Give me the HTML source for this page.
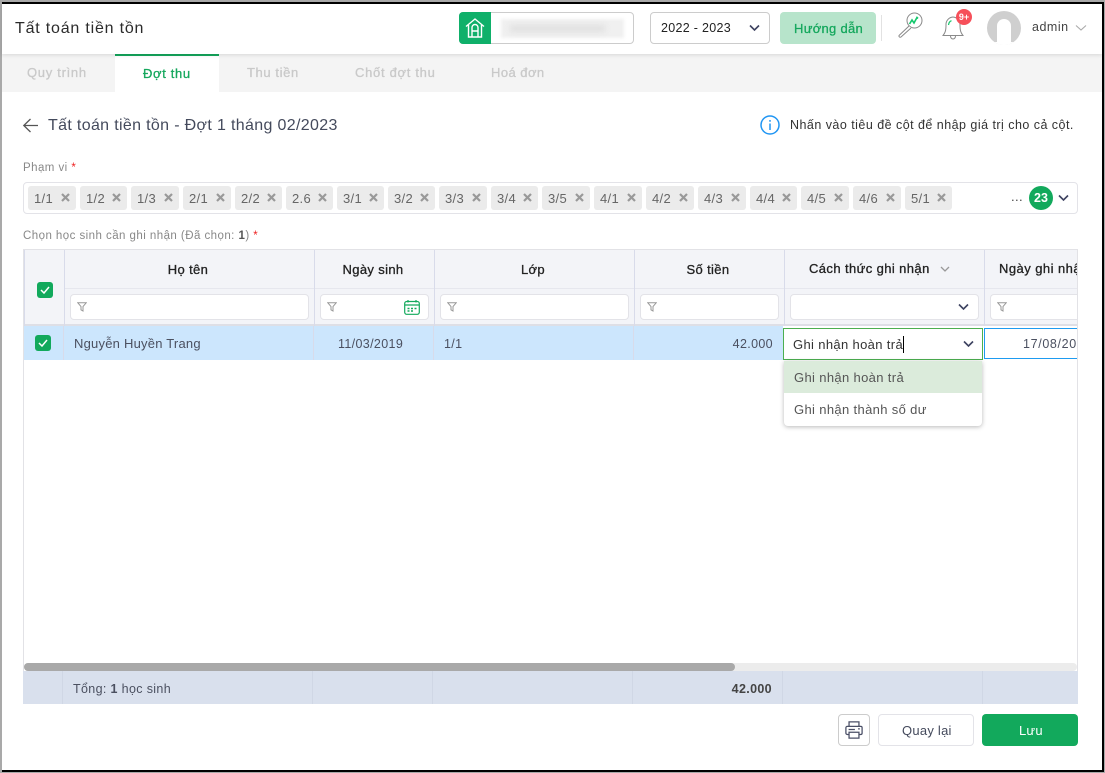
<!DOCTYPE html>
<html lang="vi"><head><meta charset="utf-8"><title>Tất toán tiền tồn</title>
<style>
*{box-sizing:border-box}
html,body{margin:0;padding:0}
body{width:1105px;height:773px;overflow:hidden;position:relative;background:#a9a9a9;font-family:"Liberation Sans",sans-serif;font-size:13px;color:#555}
.a{position:absolute}
.t{position:absolute;white-space:nowrap;line-height:18px;letter-spacing:.35px}
.sb{-webkit-text-stroke:.3px currentColor}
.box{position:absolute;background:#fff;border:1px solid #e3e3e8;border-radius:4px}
.tag{position:absolute;top:186px;height:24px;background:#ebebeb;border-radius:3px;font-size:13px;color:#666;line-height:25px;padding-left:6px;letter-spacing:.3px}
.tag svg{position:absolute;right:6px;top:7px}
.v{position:absolute;width:1px;background:#d8dbea}
.h{color:#222;font-size:13px;transform:translateX(-50%)}
svg{position:absolute;display:block}
</style></head><body>
<div class="a" style="left:2px;top:2px;width:1102px;height:770px;background:#000"></div>
<div class="a" id="page" style="left:2px;top:4px;width:1100px;height:766px;background:#fff"></div>

<!-- header -->
<div class="a" style="left:2px;top:4px;width:1100px;height:50px;background:#fff;box-shadow:0 1px 4px rgba(0,0,0,.12);z-index:1"></div>
<div style="position:absolute;inset:0;z-index:2">
<div class="t" style="left:15px;top:20px;font-size:16px;color:#2b2b2b;letter-spacing:.8px">Tất toán tiền tồn</div>

<div class="box" style="left:459px;top:12px;width:175px;height:32px;border-color:#ccc"></div>
<div class="a" style="left:459px;top:12px;width:32px;height:32px;background:#0fb06a;border-radius:4px 0 0 4px"></div>
<svg style="left:464px;top:17px" width="22" height="22" viewBox="0 0 22 22" fill="none" stroke="#fff" stroke-width="1.4"><path d="M2 9.5 11 2l9 7.5M4.5 8v12h13V8"/><path d="M8 20v-9.5a3 3 0 0 1 6 0V20M8 14h6"/></svg>
<div class="a" style="left:501px;top:19px;width:123px;height:19px;background:#f0f0f0;filter:blur(1.500px)"></div>
<div class="a" style="left:510px;top:25px;width:95px;height:7px;background:#e0e0e0;filter:blur(3px)"></div>

<div class="box" style="left:650px;top:12px;width:120px;height:32px;border-color:#ccc"></div>
<div class="t" style="left:661px;top:19px;color:#222;font-size:12.5px;letter-spacing:.3px">2022 - 2023</div>
<svg style="left:749px;top:24px" width="11" height="8" viewBox="0 0 11 8" fill="none" stroke="#3d4260" stroke-width="1.6"><path d="M1 1.5l4.5 4.500L10 1.500"/></svg>

<div class="a" style="left:780px;top:12px;width:96px;height:32px;background:#b7e4cb;border-radius:4px"></div>
<div class="t sb" style="left:794px;top:20px;color:#14a75c;font-size:13px;letter-spacing:.3px">Hướng dẫn</div>
<div class="a" style="left:881px;top:15px;width:1px;height:26px;background:#e2e2e2"></div>

<svg style="left:897px;top:12px" width="27" height="27" viewBox="0 0 27 27" fill="none"><circle cx="17.500" cy="8.500" r="7.500" stroke="#888" stroke-width="1"/><path d="M12 14 2 23.500a1.300 1.300 0 0 0 2 1.500L14 16" stroke="#888" fill="#fff"/><path d="M12.500 12l2.500-4 2 3 3-5.500 1 1" stroke="#12c76b" stroke-width="1.600"/></svg>
<svg style="left:941px;top:14px" width="26" height="28" viewBox="0 0 26 28" fill="none" stroke="#8a8a8a" stroke-width="1"><path d="M12 3a7.500 7.500 0 0 0-7 8c0 6-1 8-3 10.500h20c-2-2.500-3-4.500-3-10.500a7.500 7.500 0 0 0-7-8z"/><path d="M9.500 22a2.500 3 0 0 0 5 0"/><path d="M7.500 11c.3-2.500 1.500-3.800 3-4.300" stroke="#12c76b" stroke-width="1.200"/></svg>
<div class="a" style="left:956px;top:9px;width:16px;height:16px;border-radius:50%;background:#f6505a;color:#fff;font-size:9px;font-weight:bold;line-height:16px;text-align:center">9+</div>

<div class="a" style="left:987px;top:11px;width:34px;height:34px;border-radius:50%;background:#cfcfcf;overflow:hidden">
<div class="a" style="left:10px;top:8px;width:14px;height:28px;border-radius:7px 7px 0 0;background:#fff"></div>
<div class="a" style="left:7px;top:31px;width:20px;height:3px;background:#fff"></div></div>
<div class="t" style="left:1032px;top:18px;color:#444;font-size:12.500px;letter-spacing:.5px">admin</div>
<svg style="left:1075px;top:24px" width="12" height="8" viewBox="0 0 12 8" fill="none" stroke="#aaa" stroke-width="1.100"><path d="M1 1.500l5 4.500 5-4.500"/></svg>
</div>

<!-- tabs -->
<div class="a" style="left:2px;top:54px;width:1100px;height:38px;background:#f4f4f4"></div>
<div class="a" style="left:115px;top:54px;width:104px;height:38px;background:#fff;border-top:2px solid #14a75c"></div>
<div class="t sb" style="left:27px;top:64px;color:#c9c9c9;letter-spacing:.7px">Quy trình</div>
<div class="t sb" style="left:143px;top:65px;color:#14a75c;letter-spacing:.65px">Đợt thu</div>
<div class="t sb" style="left:247px;top:64px;color:#c9c9c9;letter-spacing:.6px">Thu tiền</div>
<div class="t sb" style="left:355px;top:64px;color:#c9c9c9;letter-spacing:.7px">Chốt đợt thu</div>
<div class="t sb" style="left:491px;top:64px;color:#c9c9c9;letter-spacing:.45px">Hoá đơn</div>

<!-- subtitle -->
<svg style="left:22px;top:117px" width="17" height="17" viewBox="0 0 17 17" fill="none" stroke="#555" stroke-width="1.300"><path d="M16 8.500H2M8.500 2 1.800 8.500 8.500 15"/></svg>
<div class="t" style="left:48px;top:117px;font-size:16px;color:#444a5c;letter-spacing:.34px">Tất toán tiền tồn - Đợt 1 tháng 02/2023</div>
<svg style="left:760px;top:115px" width="20" height="20" viewBox="0 0 20 20" fill="none" stroke="#2196f3" stroke-width="1.500"><circle cx="10" cy="10" r="9"/><path d="M10 8.500V15M10 5v1.800"/></svg>
<div class="t" style="left:790px;top:116px;color:#333;font-size:12.500px;letter-spacing:.47px">Nhấn vào tiêu đề cột để nhập giá trị cho cả cột.</div>

<!-- scope -->
<div class="t" style="left:23px;top:159px;font-size:11.500px;color:#888;letter-spacing:.45px">Phạm vi <span style="color:#e22">*</span></div>
<div class="box" style="left:23px;top:182px;width:1055px;height:32px"></div>
<div class="tag" style="left:28px;width:48px">1/1<svg width="9" height="9" viewBox="0 0 9 9" stroke="#999" stroke-width="2.200"><path d="M1 1l7 7M8 1 1 8"/></svg></div>
<div class="tag" style="left:80px;width:47px">1/2<svg width="9" height="9" viewBox="0 0 9 9" stroke="#999" stroke-width="2.200"><path d="M1 1l7 7M8 1 1 8"/></svg></div>
<div class="tag" style="left:131px;width:48px">1/3<svg width="9" height="9" viewBox="0 0 9 9" stroke="#999" stroke-width="2.200"><path d="M1 1l7 7M8 1 1 8"/></svg></div>
<div class="tag" style="left:183px;width:48px">2/1<svg width="9" height="9" viewBox="0 0 9 9" stroke="#999" stroke-width="2.200"><path d="M1 1l7 7M8 1 1 8"/></svg></div>
<div class="tag" style="left:235px;width:47px">2/2<svg width="9" height="9" viewBox="0 0 9 9" stroke="#999" stroke-width="2.200"><path d="M1 1l7 7M8 1 1 8"/></svg></div>
<div class="tag" style="left:286px;width:47px">2.6<svg width="9" height="9" viewBox="0 0 9 9" stroke="#999" stroke-width="2.200"><path d="M1 1l7 7M8 1 1 8"/></svg></div>
<div class="tag" style="left:337px;width:47px">3/1<svg width="9" height="9" viewBox="0 0 9 9" stroke="#999" stroke-width="2.200"><path d="M1 1l7 7M8 1 1 8"/></svg></div>
<div class="tag" style="left:388px;width:47px">3/2<svg width="9" height="9" viewBox="0 0 9 9" stroke="#999" stroke-width="2.200"><path d="M1 1l7 7M8 1 1 8"/></svg></div>
<div class="tag" style="left:439px;width:48px">3/3<svg width="9" height="9" viewBox="0 0 9 9" stroke="#999" stroke-width="2.200"><path d="M1 1l7 7M8 1 1 8"/></svg></div>
<div class="tag" style="left:491px;width:47px">3/4<svg width="9" height="9" viewBox="0 0 9 9" stroke="#999" stroke-width="2.200"><path d="M1 1l7 7M8 1 1 8"/></svg></div>
<div class="tag" style="left:542px;width:48px">3/5<svg width="9" height="9" viewBox="0 0 9 9" stroke="#999" stroke-width="2.200"><path d="M1 1l7 7M8 1 1 8"/></svg></div>
<div class="tag" style="left:594px;width:48px">4/1<svg width="9" height="9" viewBox="0 0 9 9" stroke="#999" stroke-width="2.200"><path d="M1 1l7 7M8 1 1 8"/></svg></div>
<div class="tag" style="left:646px;width:48px">4/2<svg width="9" height="9" viewBox="0 0 9 9" stroke="#999" stroke-width="2.200"><path d="M1 1l7 7M8 1 1 8"/></svg></div>
<div class="tag" style="left:698px;width:48px">4/3<svg width="9" height="9" viewBox="0 0 9 9" stroke="#999" stroke-width="2.200"><path d="M1 1l7 7M8 1 1 8"/></svg></div>
<div class="tag" style="left:750px;width:47px">4/4<svg width="9" height="9" viewBox="0 0 9 9" stroke="#999" stroke-width="2.200"><path d="M1 1l7 7M8 1 1 8"/></svg></div>
<div class="tag" style="left:801px;width:48px">4/5<svg width="9" height="9" viewBox="0 0 9 9" stroke="#999" stroke-width="2.200"><path d="M1 1l7 7M8 1 1 8"/></svg></div>
<div class="tag" style="left:853px;width:48px">4/6<svg width="9" height="9" viewBox="0 0 9 9" stroke="#999" stroke-width="2.200"><path d="M1 1l7 7M8 1 1 8"/></svg></div>
<div class="tag" style="left:905px;width:47px">5/1<svg width="9" height="9" viewBox="0 0 9 9" stroke="#999" stroke-width="2.200"><path d="M1 1l7 7M8 1 1 8"/></svg></div>
<div class="t" style="left:1011px;top:188px;color:#444;letter-spacing:.4px">...</div>
<div class="a" style="left:1029px;top:186px;width:24px;height:24px;border-radius:50%;background:#12a95c;color:#fff;font-size:12.500px;font-weight:bold;line-height:25px;text-align:center">23</div>
<svg style="left:1058px;top:194px" width="11" height="8" viewBox="0 0 11 8" fill="none" stroke="#3d4260" stroke-width="1.600"><path d="M1 1.500l4.500 4.500L10 1.500"/></svg>

<div class="t" style="left:23px;top:227px;font-size:11.500px;color:#888;letter-spacing:.45px">Chọn học sinh cần ghi nhận (Đã chọn: <b style="color:#555">1</b>) <span style="color:#e22">*</span></div>

<!-- table -->
<div class="a" style="left:23px;top:249px;width:1055px;height:422px;border:1px solid #e2e2e6;border-bottom:0"></div>
<div class="a" style="left:24px;top:250px;width:1053px;height:76px;background:#f3f4f8;border-bottom:2px solid #dedfe6"></div>
<div class="a" style="left:64px;top:288px;width:1013px;height:1px;background:#e6e7ee"></div>
<div class="v" style="left:24px;top:250px;height:76px"></div>
<div class="v" style="left:64px;top:250px;height:76px"></div>
<div class="v" style="left:314px;top:250px;height:76px"></div>
<div class="v" style="left:434px;top:250px;height:76px"></div>
<div class="v" style="left:634px;top:250px;height:76px"></div>
<div class="v" style="left:784px;top:250px;height:76px"></div>
<div class="v" style="left:984px;top:250px;height:76px"></div>

<div class="t h sb" style="left:188px;top:261px">Họ tên</div>
<div class="t h sb" style="left:373px;top:261px">Ngày sinh</div>
<div class="t h sb" style="left:533px;top:261px">Lớp</div>
<div class="t h sb" style="left:708px;top:261px">Số tiền</div>
<div class="t sb" style="left:809px;top:260px;color:#222;letter-spacing:.4px">Cách thức ghi nhận</div>
<svg style="left:940px;top:266px" width="10" height="7" viewBox="0 0 10 7" fill="none" stroke="#999" stroke-width="1.300"><path d="M1 1l4 4 4-4"/></svg>
<div class="a" style="left:985px;top:250px;width:92px;height:38px;overflow:hidden"><div class="t sb" style="left:14px;top:10px;color:#222;letter-spacing:.45px">Ngày ghi nhận</div></div>

<div class="box" style="left:70px;top:294px;width:239px;height:26px"></div>
<div class="box" style="left:320px;top:294px;width:109px;height:26px"></div>
<div class="box" style="left:440px;top:294px;width:189px;height:26px"></div>
<div class="box" style="left:640px;top:294px;width:139px;height:26px"></div>
<div class="box" style="left:790px;top:294px;width:189px;height:26px"></div>
<div class="box" style="left:990px;top:294px;width:87px;height:26px;border-right:0;border-radius:4px 0 0 4px"></div>
<svg style="left:77px;top:302px" width="10" height="10" viewBox="0 0 10 10" fill="none" stroke="#999"><path d="M.7.700h8.600L6 4.500V9L4 7.800V4.500z"/></svg>
<svg style="left:327px;top:302px" width="10" height="10" viewBox="0 0 10 10" fill="none" stroke="#999"><path d="M.7.700h8.600L6 4.500V9L4 7.800V4.500z"/></svg>
<svg style="left:447px;top:302px" width="10" height="10" viewBox="0 0 10 10" fill="none" stroke="#999"><path d="M.7.700h8.600L6 4.500V9L4 7.800V4.500z"/></svg>
<svg style="left:647px;top:302px" width="10" height="10" viewBox="0 0 10 10" fill="none" stroke="#999"><path d="M.7.700h8.600L6 4.500V9L4 7.800V4.500z"/></svg>
<svg style="left:997px;top:302px" width="10" height="10" viewBox="0 0 10 10" fill="none" stroke="#999"><path d="M.7.700h8.600L6 4.500V9L4 7.800V4.500z"/></svg>
<svg style="left:404px;top:300px" width="16" height="15" viewBox="0 0 16 15" fill="none" stroke="#12a95c" stroke-width="1.200"><rect x=".7" y="1.500" width="14.600" height="12.800" rx="2"/><path d="M.7 5h14.600M4 0v2.500M12 0v2.500"/><path d="M3.500 8.500h2M7 8.500h2M10.500 8.500h2M3.500 11h2M7 11h2" stroke-width="1.400"/></svg>
<svg style="left:958px;top:303px" width="11" height="8" viewBox="0 0 11 8" fill="none" stroke="#3d4260" stroke-width="1.600"><path d="M1 1.500l4.500 4.500L10 1.500"/></svg>

<div class="a" style="left:37px;top:282px;width:16px;height:16px;background:#12a95c;border-radius:3px"></div>
<svg style="left:40px;top:286px" width="10" height="8" viewBox="0 0 10 8" fill="none" stroke="#fff" stroke-width="1.500"><path d="M1 4l3 3 5-6"/></svg>

<!-- row -->
<div class="a" style="left:24px;top:326px;width:759px;height:34px;background:#cce6fd"></div>
<div class="v" style="left:63px;top:326px;height:34px"></div>
<div class="v" style="left:313px;top:326px;height:34px"></div>
<div class="v" style="left:433px;top:326px;height:34px"></div>
<div class="v" style="left:633px;top:326px;height:34px"></div>
<div class="a" style="left:35px;top:335px;width:16px;height:16px;background:#12a95c;border-radius:3px"></div>
<svg style="left:38px;top:339px" width="10" height="8" viewBox="0 0 10 8" fill="none" stroke="#fff" stroke-width="1.500"><path d="M1 4l3 3 5-6"/></svg>
<div class="t" style="left:74px;top:335px;color:#4b5060;letter-spacing:.22px">Nguyễn Huyền Trang</div>
<div class="t" style="left:338px;top:335px;color:#4b5060;font-size:12.500px">11/03/2019</div>
<div class="t" style="left:444px;top:335px;color:#4b5060;font-size:12.500px">1/1</div>
<div class="t" style="right:332px;top:335px;color:#4b5060;font-size:12.500px">42.000</div>

<div class="a" style="left:783px;top:328px;width:200px;height:32px;background:#fff;border:1px solid #4caf50"></div>
<div class="t" style="left:793px;top:336px;color:#333">Ghi nhận hoàn trả</div>
<div class="a" style="left:903px;top:336px;width:1px;height:17px;background:#000"></div>
<svg style="left:963px;top:340px" width="11" height="8" viewBox="0 0 11 8" fill="none" stroke="#3d4260" stroke-width="1.600"><path d="M1 1.500l4.500 4.500L10 1.500"/></svg>

<div class="a" style="left:984px;top:328px;width:93px;height:31px;background:#fff;border:1px solid #1e9bf0;border-right:0;overflow:hidden"><div class="t" style="left:38px;top:6px;color:#4b5060;font-size:12.500px;letter-spacing:.65px">17/08/2023</div></div>

<div class="a" style="left:784px;top:361px;width:198px;height:65px;background:#fff;border-radius:0 0 4px 4px;box-shadow:0 1px 5px rgba(0,0,0,.28)"></div>
<div class="a" style="left:784px;top:361px;width:198px;height:32px;background:#dbebdb"></div>
<div class="t" style="left:794px;top:369px;color:#555">Ghi nhận hoàn trả</div>
<div class="t" style="left:794px;top:401px;color:#555">Ghi nhận thành số dư</div>

<!-- scrollbar -->
<div class="a" style="left:24px;top:663px;width:1053px;height:8px;background:#ececec;border-radius:4px"></div>
<div class="a" style="left:24px;top:663px;width:711px;height:8px;background:#a9a9a9;border-radius:4px"></div>

<!-- footer -->
<div class="a" style="left:23px;top:671px;width:1055px;height:33px;background:#d9e0ed"></div>
<div class="v" style="left:62px;top:671px;height:33px;background:#d0d7e5"></div>
<div class="v" style="left:312px;top:671px;height:33px;background:#d0d7e5"></div>
<div class="v" style="left:432px;top:671px;height:33px;background:#d0d7e5"></div>
<div class="v" style="left:632px;top:671px;height:33px;background:#d0d7e5"></div>
<div class="v" style="left:782px;top:671px;height:33px;background:#d0d7e5"></div>
<div class="v" style="left:982px;top:671px;height:33px;background:#d0d7e5"></div>
<div class="t" style="left:73px;top:680px;color:#4b5060;font-size:12.500px">Tổng: <b>1</b> học sinh</div>
<div class="t" style="right:333px;top:680px;color:#444;font-weight:bold;font-size:12.500px">42.000</div>

<!-- buttons -->
<div class="box" style="left:838px;top:714px;width:32px;height:32px;border-color:#ccc"></div>
<svg style="left:845px;top:721px" width="18" height="18" viewBox="0 0 20 20" fill="none" stroke="#4a4f66" stroke-width="1.400"><path d="M4.500 6V1h11v5M4.500 15H2.500a1.500 1.500 0 0 1-1.500-1.500V7.500A1.500 1.500 0 0 1 2.500 6h15A1.500 1.500 0 0 1 19 7.500v6a1.500 1.500 0 0 1-1.500 1.500h-2"/><path d="M4.500 12.500h11V19h-11zM4 9.500h7M15.500 9v-1M14.500 8.700h2"/></svg>
<div class="box" style="left:878px;top:714px;width:96px;height:32px"></div>
<div class="t" style="left:902px;top:722px;color:#444a5c;letter-spacing:.25px">Quay lại</div>
<div class="a" style="left:982px;top:714px;width:96px;height:32px;background:#12a95c;border-radius:4px"></div>
<div class="t" style="left:1019px;top:722px;color:#fff;letter-spacing:.2px">Lưu</div>
</body></html>
